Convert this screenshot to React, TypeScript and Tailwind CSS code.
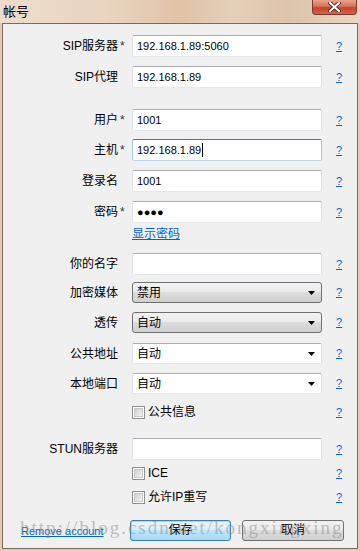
import React from "react";

const font = "font-['Liberation_Sans','Noto_Sans_CJK_SC',sans-serif]";

function Help() {
  return (
    <span className="ml-[14px] text-[11px] leading-none text-[#0066cc] underline">?</span>
  );
}

function Label({ text, star }: { text: string; star?: boolean }) {
  return (
    <>
      <div className="w-[115px] shrink-0 text-right text-[12px] leading-none text-black">{text}</div>
      <div className="w-[14px] shrink-0 pl-[2px] text-[12px] leading-none text-[#333]">{star ? "*" : ""}</div>
    </>
  );
}

function TextBox({ value, focused }: { value?: string; focused?: boolean }) {
  const cls = focused
    ? "border-[#3d7bad] border-l-[#a4c9e3] border-r-[#a4c9e3] border-b-[#b7d9ed]"
    : "border-[#abadb3] border-l-[#e2e3ea] border-r-[#dbdfe6] border-b-[#e3e9ef]";
  return (
    <div className={`flex h-[22px] w-[190px] items-center rounded-[2px] border bg-white pl-[4px] text-[11px] text-black ${cls}`}>
      {value}
      {focused && <span className="ml-[1px] h-[14px] w-px bg-black" />}
    </div>
  );
}

function Arrow() {
  return (
    <svg width="7" height="4" viewBox="0 0 7 4" className="mr-[6px]">
      <path d="M0 0H7L3.5 4Z" fill="#000" />
    </svg>
  );
}

function ButtonSelect({ value }: { value: string }) {
  return (
    <div className="flex h-[21px] w-[190px] items-center justify-between rounded-[3px] border border-[#707070] bg-[linear-gradient(#f2f2f2_0%,#ebebeb_45%,#dddddd_50%,#cfcfcf_100%)] pl-[4px] text-[12px] leading-none text-black">
      {value}
      <Arrow />
    </div>
  );
}

function ComboBox({ value }: { value: string }) {
  return (
    <div className="flex h-[21px] w-[190px] items-center justify-between rounded-[2px] border border-[#abadb3] border-l-[#e2e3ea] border-r-[#dbdfe6] border-b-[#e3e9ef] bg-white pl-[4px] text-[12px] leading-none text-black">
      {value}
      <Arrow />
    </div>
  );
}

function Check({ text }: { text: string }) {
  return (
    <div className="flex w-[190px] items-center text-[12px] leading-none text-black">
      <div className="flex h-[13px] w-[13px] items-center justify-center border border-[#8f8f8f] bg-white">
        <div className="h-[9px] w-[9px] border border-[#c8c8c8] bg-[linear-gradient(135deg,#cfcfcf,#f4f4f4)]" />
      </div>
      <span className="ml-[3px]">{text}</span>
    </div>
  );
}

function Row({ children, className = "" }: { children: React.ReactNode; className?: string }) {
  return <div className={`flex items-center ${className}`}>{children}</div>;
}

export default function App() {
  return (
    <div className={`relative h-[551px] w-[360px] overflow-hidden bg-[#e4ccb2] ${font}`}>
      {/* title bar */}
      <div className="relative flex h-[23px] items-center bg-[linear-gradient(90deg,#ecdcca_0%,#e9d5c0_30%,#dfc3a6_50%,#e6cfb9_65%,#ddc4aa_80%,#e8d6c4_100%)] pl-[3px]">
        <span className="text-[13px] leading-none text-black">帐号</span>
        <div className="absolute right-[3px] top-0 flex h-[15px] w-[45px] items-center justify-center rounded-b-[4px] border border-t-0 border-[#7a3a2a] bg-[linear-gradient(#e9a38f_0%,#d9715a_45%,#c7432b_55%,#d46447_100%)]">
          <svg width="13" height="10" viewBox="0 0 13 10">
            <path d="M2 1L11 9M11 1L2 9" stroke="#3b2a25" strokeWidth="3.6" strokeLinecap="square" />
            <path d="M2 1L11 9M11 1L2 9" stroke="#fff" strokeWidth="2" strokeLinecap="square" />
          </svg>
        </div>
      </div>

      {/* client area */}
      <div className="ml-[2px] mr-[2px] h-[526px] border border-[#7b6a5c] bg-[#f0f0f0] pt-[11px]">
        <Row>
          <Label text="SIP服务器" star />
          <TextBox value="192.168.1.89:5060" />
          <Help />
        </Row>
        <Row className="mt-[9px]">
          <Label text="SIP代理" />
          <TextBox value="192.168.1.89" />
          <Help />
        </Row>
        <Row className="mt-[21px]">
          <Label text="用户" star />
          <TextBox value="1001" />
          <Help />
        </Row>
        <Row className="mt-[8px]">
          <Label text="主机" star />
          <TextBox value="192.168.1.89" focused />
          <Help />
        </Row>
        <Row className="mt-[9px]">
          <Label text="登录名" />
          <TextBox value="1001" />
          <Help />
        </Row>
        <Row className="mt-[9px]">
          <Label text="密码" star />
          <TextBox value="●●●●" />
          <Help />
        </Row>
        <div className="mt-[3px] flex h-[16px] items-center pl-[129px]">
          <span className="text-[12px] leading-none text-[#0066cc] underline">显示密码</span>
        </div>
        <Row className="mt-[11px]">
          <Label text="你的名字" />
          <TextBox />
          <Help />
        </Row>
        <Row className="mt-[7px]">
          <Label text="加密媒体" />
          <ButtonSelect value="禁用" />
          <Help />
        </Row>
        <Row className="mt-[9px]">
          <Label text="透传" />
          <ButtonSelect value="自动" />
          <Help />
        </Row>
        <Row className="mt-[10px]">
          <Label text="公共地址" />
          <ComboBox value="自动" />
          <Help />
        </Row>
        <Row className="mt-[9px]">
          <Label text="本地端口" />
          <ComboBox value="自动" />
          <Help />
        </Row>
        <Row className="mt-[11px] h-[14px]">
          <Label text="" />
          <Check text="公共信息" />
          <Help />
        </Row>
        <Row className="mt-[19px]">
          <Label text="STUN服务器" />
          <TextBox />
          <Help />
        </Row>
        <Row className="mt-[6px] h-[14px]">
          <Label text="" />
          <Check text="ICE" />
          <Help />
        </Row>
        <Row className="mt-[10px] h-[14px]">
          <Label text="" />
          <Check text="允许IP重写" />
          <Help />
        </Row>
        <div className="mt-[14px] flex items-center">
          <div className="w-[127px] pl-[18px]">
            <span className="text-[11px] leading-none text-[#0066cc] underline">Remove account</span>
          </div>
          <div className="flex h-[21px] w-[101px] items-center justify-center rounded-[3px] border border-[#3c7fb1] bg-[linear-gradient(#eaf6fd_0%,#d9f0fc_45%,#bee6fd_50%,#a7d9f5_100%)] text-[12px] leading-none text-black shadow-[inset_0_0_0_1px_#a8d7f2]">
            保存
          </div>
          <div className="ml-[11px] flex h-[21px] w-[102px] items-center justify-center rounded-[3px] border border-[#707070] bg-[linear-gradient(#f2f2f2_0%,#ebebeb_45%,#dddddd_50%,#cfcfcf_100%)] text-[12px] leading-none text-black">
            取消
          </div>
        </div>
      </div>

      {/* watermark */}
      <div className="pointer-events-none absolute left-[20px] top-[518px] whitespace-nowrap font-['Liberation_Serif',serif] text-[19px] leading-none tracking-[2px] text-[#8a8a8a] opacity-50">
        http://blog.csdn.net/kongxingxing
      </div>
    </div>
  );
}
